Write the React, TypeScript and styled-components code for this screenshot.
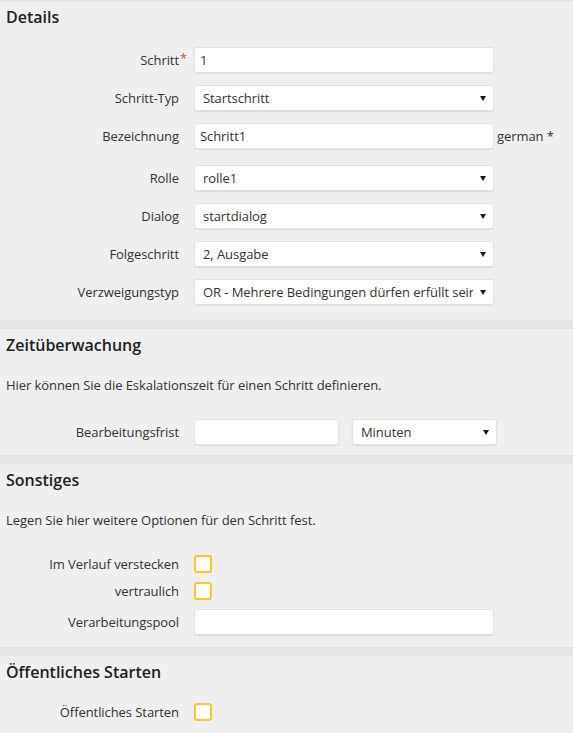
import React from "react";
import styled, { createGlobalStyle } from "styled-components";

const GlobalStyle = createGlobalStyle`
  html, body {
    margin: 0;
    padding: 0;
    background: #e4e4e4;
  }
  body {
    font-family: "Open Sans", "Liberation Sans", sans-serif;
    font-size: 13px;
    letter-spacing: -0.07px;
    color: #333333;
  }
  * {
    box-sizing: border-box;
  }
`;

const Page = styled.div`
  display: flex;
  flex-direction: column;
  gap: 9px;
  width: 573px;
  padding-top: 2px;
`;

const Panel = styled.section<{ $top?: number; $bottom?: number }>`
  background: #efefef;
  padding: ${(p) => p.$top ?? 5}px 6px ${(p) => p.$bottom ?? 12}px;
`;

const Heading = styled.h2<{ $gap?: number }>`
  margin: 0 0 ${(p) => p.$gap ?? 20}px;
  font-size: 16px;
  line-height: 22px;
  font-weight: 600;
  letter-spacing: 0;
  color: #222222;
`;

const Description = styled.p<{ $gap?: number }>`
  margin: 0 0 ${(p) => p.$gap ?? 25}px;
  line-height: 18px;
`;

const Form = styled.div<{ $gap?: number }>`
  display: flex;
  flex-direction: column;
  gap: ${(p) => p.$gap ?? 12}px;
`;

const Row = styled.div<{ $extra?: number }>`
  display: grid;
  grid-template-columns: 173px auto;
  column-gap: 15px;
  align-items: center;
  margin-bottom: ${(p) => p.$extra ?? 0}px;
`;

const Label = styled.label`
  text-align: right;
  line-height: 18px;
  white-space: nowrap;
`;

const Required = styled.span`
  position: relative;

  &::after {
    content: "*";
    position: absolute;
    left: 100%;
    top: -2px;
    padding-left: 1px;
    color: #e2474b;
  }
`;

const Control = styled.div<{ $gap?: number }>`
  display: flex;
  align-items: center;
  gap: ${(p) => p.$gap ?? 3}px;
`;

const fieldBase = `
  height: 26px;
  border: 1px solid #e2e2e2;
  border-radius: 3px;
  background: #ffffff;
  box-shadow: 0 1px 1px rgba(0, 0, 0, 0.08);
  font-family: "Open Sans", "Liberation Sans", sans-serif;
  font-size: 13px;
  letter-spacing: -0.07px;
  color: #333333;
  outline: none;
`;

const TextInput = styled.input<{ $w?: number }>`
  ${fieldBase}
  width: ${(p) => p.$w ?? 300}px;
  padding: 0 5px;
`;

const SelectWrap = styled.div<{ $w?: number }>`
  position: relative;
  width: ${(p) => p.$w ?? 300}px;

  &::after {
    content: "";
    position: absolute;
    right: 8px;
    top: 11px;
    border-left: 3px solid transparent;
    border-right: 3px solid transparent;
    border-top: 5px solid #1a1a1a;
    pointer-events: none;
  }
`;

const Select = styled.select`
  ${fieldBase}
  appearance: none;
  -webkit-appearance: none;
  width: 100%;
  padding: 0 20px 0 8px;
`;

const Suffix = styled.span`
  white-space: nowrap;
`;

const Checkbox = styled.span`
  display: block;
  width: 18px;
  height: 18px;
  border: 2px solid #fcc62d;
  border-radius: 3px;
  background: #ffffff;
`;

const CheckRow = styled(Row)`
  height: 18px;
`;

type SelectFieldProps = { value: string; width?: number };

const SelectField = ({ value, width }: SelectFieldProps) => (
  <SelectWrap $w={width}>
    <Select defaultValue={value}>
      <option value={value}>{value}</option>
    </Select>
  </SelectWrap>
);

const selects = [
  { label: "Rolle", value: "rolle1" },
  { label: "Dialog", value: "startdialog" },
  { label: "Folgeschritt", value: "2, Ausgabe" },
  { label: "Verzweigungstyp", value: "OR - Mehrere Bedingungen dürfen erfüllt sein" },
];

export default function App() {
  return (
    <>
      <GlobalStyle />
      <Page>
        <Panel $top={4} $bottom={15}>
          <Heading $gap={19}>Details</Heading>
          <Form>
            <Row>
              <Label>
                <Required>Schritt</Required>
              </Label>
              <Control>
                <TextInput defaultValue="1" />
              </Control>
            </Row>
            <Row>
              <Label>Schritt-Typ</Label>
              <Control>
                <SelectField value="Startschritt" />
              </Control>
            </Row>
            <Row $extra={4}>
              <Label>Bezeichnung</Label>
              <Control>
                <TextInput defaultValue="Schritt1" />
                <Suffix>german *</Suffix>
              </Control>
            </Row>
            {selects.map((s) => (
              <Row key={s.label}>
                <Label>{s.label}</Label>
                <Control>
                  <SelectField value={s.value} />
                </Control>
              </Row>
            ))}
          </Form>
        </Panel>

        <Panel $bottom={10}>
          <Heading>Zeitüberwachung</Heading>
          <Description>
            Hier können Sie die Eskalationszeit für einen Schritt definieren.
          </Description>
          <Form>
            <Row>
              <Label>Bearbeitungsfrist</Label>
              <Control $gap={13}>
                <TextInput $w={145} />
                <SelectField value="Minuten" width={145} />
              </Control>
            </Row>
          </Form>
        </Panel>

        <Panel $bottom={12}>
          <Heading>Sonstiges</Heading>
          <Description $gap={26}>
            Legen Sie hier weitere Optionen für den Schritt fest.
          </Description>
          <Form $gap={9}>
            <CheckRow>
              <Label>Im Verlauf verstecken</Label>
              <Checkbox />
            </CheckRow>
            <CheckRow>
              <Label>vertraulich</Label>
              <Checkbox />
            </CheckRow>
            <Row>
              <Label>Verarbeitungspool</Label>
              <Control>
                <TextInput />
              </Control>
            </Row>
          </Form>
        </Panel>

        <Panel $bottom={20}>
          <Heading>Öffentliches Starten</Heading>
          <Form>
            <CheckRow>
              <Label>Öffentliches Starten</Label>
              <Checkbox />
            </CheckRow>
          </Form>
        </Panel>
      </Page>
    </>
  );
}
